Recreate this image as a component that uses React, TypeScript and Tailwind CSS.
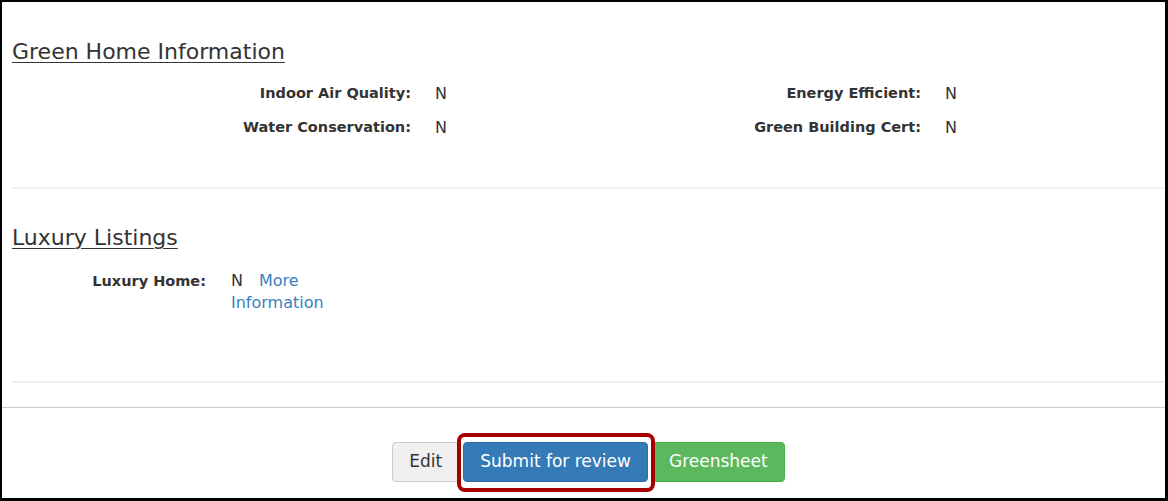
import React from "react";

const font = { fontFamily: '"DejaVu Sans", "Liberation Sans", sans-serif' };

function Field({ label, value }: { label: string; value: string }) {
  return (
    <div className="flex w-[510px] items-center">
      <div className="w-[399px] text-right text-[14.5px] font-bold text-[#333]">{label}</div>
      <div className="ml-[24px] text-[16px] text-[#333]">{value}</div>
    </div>
  );
}

export default function App() {
  return (
    <div
      className="w-[1168px] h-[501px] box-border border-l-2 border-t-2 border-r-[3px] border-b-[3px] border-black bg-white flex flex-col overflow-hidden"
      style={font}
    >
      <div className="pl-[10px] pr-[2px]">
        {/* Green Home Information */}
        <div className="pt-[35px]">
          <h3 className="text-[22px] leading-[30px] text-[#333] underline decoration-1 underline-offset-[3px]">
            Green Home Information
          </h3>
          <div className="mt-[10px] flex flex-col">
            <div className="flex h-[34px] items-center">
              <Field label="Indoor Air Quality:" value="N" />
              <Field label="Energy Efficient:" value="N" />
            </div>
            <div className="flex h-[34px] items-center">
              <Field label="Water Conservation:" value="N" />
              <Field label="Green Building Cert:" value="N" />
            </div>
          </div>
        </div>
        <div className="mt-[42px] h-[2px] bg-[#efefef]" />

        {/* Luxury Listings */}
        <div className="pt-[34px]">
          <h3 className="text-[22px] leading-[30px] text-[#333] underline decoration-1 underline-offset-[3px]">
            Luxury Listings
          </h3>
          <div className="mt-[17px] flex items-start">
            <div className="w-[194px] text-right text-[14.5px] leading-[22px] font-bold text-[#333]">
              Luxury Home:
            </div>
            <div className="ml-[25px] w-[110px] text-[16px] leading-[22px] text-[#333]">
              N
              <span className="ml-[16px] text-[#3a7fc1]">More Information</span>
            </div>
          </div>
        </div>
        <div className="mt-[67px] h-[2px] bg-[#efefef]" />
      </div>

      <div className="mt-[24px] h-px bg-[#cccccc]" />

      <div className="mt-[34px] flex justify-center gap-[4px] pl-[10px]">
        <button className="h-[40px] px-[16px] rounded-[4px] border border-[#cccccc] bg-[#f0f0f0] text-[17px] text-[#333]">
          Edit
        </button>
        <div className="relative">
          <button className="h-[40px] px-[16px] rounded-[4px] border border-[#2e6da4] bg-[#337ab7] text-[17px] text-white">
            Submit for review
          </button>
          <div className="pointer-events-none absolute left-[-6px] right-[-7px] top-[-9px] bottom-[-10px] rounded-[8px] border-[4px] border-[#a80000]" />
        </div>
        <button className="h-[40px] px-[16px] rounded-[4px] border border-[#4cae4c] bg-[#5cb85c] text-[17px] text-white">
          Greensheet
        </button>
      </div>
    </div>
  );
}
